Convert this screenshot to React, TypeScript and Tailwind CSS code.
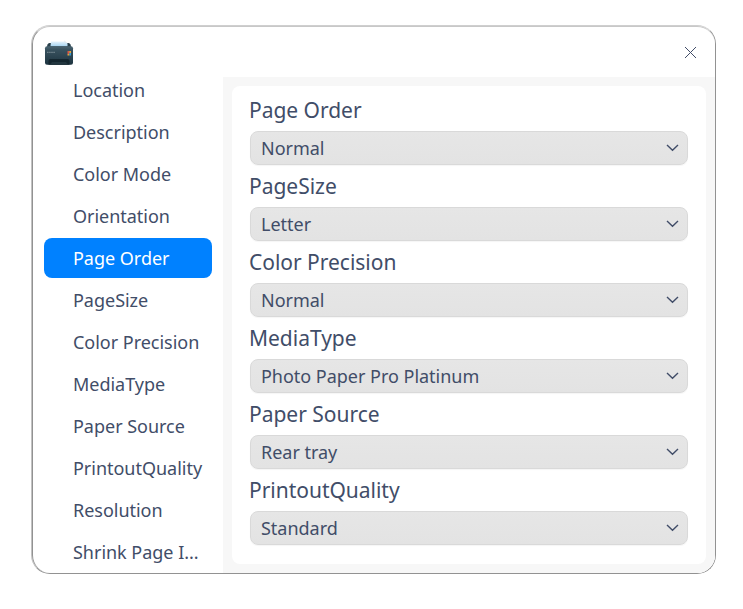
const menu = [
  "Location",
  "Description",
  "Color Mode",
  "Orientation",
  "Page Order",
  "PageSize",
  "Color Precision",
  "MediaType",
  "Paper Source",
  "PrintoutQuality",
  "Resolution",
  "Shrink Page I...",
];

const fields = [
  { label: "Page Order", value: "Normal" },
  { label: "PageSize", value: "Letter" },
  { label: "Color Precision", value: "Normal" },
  { label: "MediaType", value: "Photo Paper Pro Platinum" },
  { label: "Paper Source", value: "Rear tray" },
  { label: "PrintoutQuality", value: "Standard" },
];

function PrinterIcon() {
  return (
    <svg className="mt-1" width="30" height="28" viewBox="0 0 30 28">
      <defs>
        <linearGradient id="body" x1="0" y1="0" x2="0" y2="1">
          <stop offset="0" stopColor="#4a6471" />
          <stop offset="0.2" stopColor="#38515e" />
          <stop offset="1" stopColor="#1d3440" />
        </linearGradient>
        <linearGradient id="paper" x1="0" y1="0" x2="0" y2="1">
          <stop offset="0" stopColor="#e6f4fd" />
          <stop offset="1" stopColor="#a5d3f0" />
        </linearGradient>
      </defs>
      <path d="M3.5 4.5Q4 3 5.5 3H24.5Q26 3 26.5 4.5L27.5 8H2.5Z" fill="#2a414d" />
      <path d="M7 1.5H20.5L23.5 3.5V6.3H6.5Z" fill="url(#paper)" />
      <path d="M20 0.3L23.5 3.2L21 2.6Z" fill="#dbe6ec" />
      <rect x="1" y="6.3" width="28" height="18.4" rx="2" fill="url(#body)" />
      <path d="M4.5 24.8V21Q4.5 19 6.5 19H23.5Q25.5 19 25.5 21V24.8Z" fill="#14262f" />
      <path d="M6 24.5L8 22H22L24 24.5Z" fill="#22363f" />
      <path d="M3 12.3H11" stroke="#9cabb2" strokeWidth="1" strokeDasharray="1.6 0.5" strokeOpacity="0.7" />
      <path d="M23.5 11H25.3V14H23.5Z" fill="#d65349" />
      <path d="M25.3 11H27V13H25.3Z" fill="#e2a53b" />
      <path d="M25.3 13H27V15.5H25.3Z" fill="#369bd5" />
      <path d="M23.5 14H25.3V15.5H23.5Z" fill="#e2a53b" />
    </svg>
  );
}

export default function App() {
  return (
    <div className="h-[609px] w-[743px] overflow-hidden bg-white pt-[25px] pl-[31px] font-['Noto_Sans',sans-serif] tracking-[-0.02px] text-[#414d68]">
      <div className="h-[549px] w-[685px] rounded-[19px] border border-t-[#cfcfcf] border-r-[#929292] border-b-[#929292] border-l-[#c2c2c2]">
        <div className="flex h-full flex-col overflow-hidden rounded-[18px] border-t border-l border-t-[#c8c8c8] border-l-[#929292] bg-white">
          <header className="flex h-[50px] shrink-0 items-center justify-between pr-[17px] pl-[11px]">
            <PrinterIcon />
            <button aria-label="Close" className="mt-px">
              <svg width="14" height="14" viewBox="0 0 14 14">
                <path d="M1 1L12 12M12 1L1 12" stroke="#414d68" strokeWidth="1" />
              </svg>
            </button>
          </header>
          <div className="flex min-h-0 flex-1">
            <nav className="flex w-[190px] shrink-0 flex-col gap-0.5 pr-[11px] pl-[11px]">
              {menu.map((item, i) => (
                <div
                  key={item}
                  className={
                    "flex h-10 shrink-0 items-center rounded-lg pl-[29px] text-[18px] whitespace-nowrap first:-mt-[7px] " +
                    (i === 4 ? "bg-[#0081ff] text-white" : "")
                  }
                >
                  {item}
                </div>
              ))}
            </nav>
            <main className="flex-1 bg-[#f7f7f7] p-[9px]">
              <div className="h-full rounded-lg bg-white px-[18px] pt-[7px]">
                {fields.map((f) => (
                  <div key={f.label}>
                    <div className="-ml-px h-[38px] text-[21px] leading-[34px]">{f.label}</div>
                    <div className="mb-1 flex h-[34px] items-center justify-between rounded-lg border border-[#d9d9d9] bg-linear-to-b from-[#e6e6e6] to-[#e3e3e3] pr-2 pl-2.5 text-[18px] shadow-[0_1px_1px_rgba(0,0,0,0.04)]">
                      {f.value}
                      <svg width="14" height="10" viewBox="0 0 14 10" fill="none">
                        <path d="M2 2L7.5 7.3L13 2" stroke="#414d68" strokeWidth="1.4" />
                      </svg>
                    </div>
                  </div>
                ))}
              </div>
            </main>
          </div>
        </div>
      </div>
    </div>
  );
}
